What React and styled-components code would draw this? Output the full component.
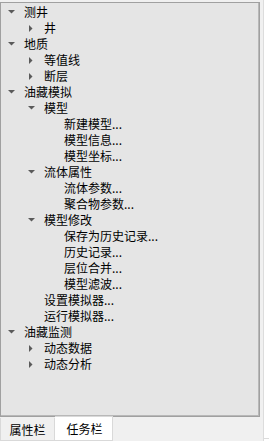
import React from 'react'
import styled, { createGlobalStyle } from 'styled-components'

const GlobalStyle = createGlobalStyle`
  html, body {
    margin: 0;
    padding: 0;
    background: #ffffff;
  }
  body {
    font-family: "Noto Sans CJK SC", "Liberation Sans", sans-serif;
    font-size: 12px;
    color: #000;
  }
`

const tree = [
  { label: '测井', level: 0, arrow: 'open' },
  { label: '井', level: 1, arrow: 'closed' },
  { label: '地质', level: 0, arrow: 'open' },
  { label: '等值线', level: 1, arrow: 'closed' },
  { label: '断层', level: 1, arrow: 'closed' },
  { label: '油藏模拟', level: 0, arrow: 'open' },
  { label: '模型', level: 1, arrow: 'open' },
  { label: '新建模型...', level: 2 },
  { label: '模型信息...', level: 2 },
  { label: '模型坐标...', level: 2 },
  { label: '流体属性', level: 1, arrow: 'open' },
  { label: '流体参数...', level: 2 },
  { label: '聚合物参数...', level: 2 },
  { label: '模型修改', level: 1, arrow: 'open' },
  { label: '保存为历史记录...', level: 2 },
  { label: '历史记录...', level: 2 },
  { label: '层位合并...', level: 2 },
  { label: '模型滤波...', level: 2 },
  { label: '设置模拟器...', level: 1 },
  { label: '运行模拟器...', level: 1 },
  { label: '油藏监测', level: 0, arrow: 'open' },
  { label: '动态数据', level: 1, arrow: 'closed' },
  { label: '动态分析', level: 1, arrow: 'closed' },
]

const Window = styled.div`
  width: 269px;
  height: 441px;
  display: flex;
  background: #ffffff;
`

const Dock = styled.div`
  width: 264px;
  height: 441px;
  display: flex;
  flex-direction: column;
  background: #f0f0f0;
  border-right: 1px solid #dcdcdc;
  box-sizing: border-box;
`

const Side = styled.div`
  flex: 1;
  height: 438px;
  border-bottom: 1px solid #dcdcdc;
`

const Panel = styled.div`
  margin-top: 2px;
  width: 260px;
  height: 415px;
  box-sizing: border-box;
  background: #e5e5e5;
  border: 1px solid #a0a0a0;
  box-shadow: inset -1px -1px 0 #b8b8b8;
  padding-top: 1px;
  overflow: hidden;
`

const Row = styled.div`
  height: 16px;
  display: flex;
  align-items: center;
  padding-left: ${({ level }) => 3 + level * 20}px;
  line-height: 16px;
  white-space: nowrap;
`

const ArrowBox = styled.span`
  width: 20px;
  height: 16px;
  box-sizing: border-box;
  display: flex;
  align-items: center;
  padding-left: ${({ kind }) => (kind === 'closed' ? 5 : 4)}px;
  flex-shrink: 0;
`

const Label = styled.span`
  font-size: 12px;
  color: #000;
`

const Tabs = styled.div`
  display: flex;
  height: 24px;
  align-items: flex-end;
`

const Tab = styled.div`
  height: ${({ active }) => (active ? 25 : 23)}px;
  width: ${({ active }) => (active ? 58 : 55)}px;
  box-sizing: border-box;
  display: flex;
  align-items: center;
  justify-content: center;
  font-size: 12px;
  background: ${({ active }) => (active ? '#ffffff' : '#f0f0f0')};
  border: 1px solid #d9d9d9;
  border-top: ${({ active }) => (active ? '1px solid #d9d9d9' : 'none')};
  border-left: ${({ active }) => (active ? 'none' : '1px solid #d9d9d9')};
  margin-top: ${({ active }) => (active ? -1 : 0)}px;
  padding-left: ${({ active }) => (active ? 2 : 0)}px;
`

const Arrow = ({ kind }) => {
  if (kind === 'open') {
    return (
      <svg width="7" height="4" viewBox="0 0 7 4">
        <path d="M0 0 L7 0 L3.5 3.5 Z" fill="#5a5a5a" />
      </svg>
    )
  }
  if (kind === 'closed') {
    return (
      <svg width="4" height="7" viewBox="0 0 4 7">
        <path d="M0 0 L3.5 3.5 L0 7 Z" fill="#5a5a5a" />
      </svg>
    )
  }
  return null
}

export default function App() {
  return (
    <>
      <GlobalStyle />
      <Window>
        <Dock>
          <Panel>
            {tree.map((item, i) => (
              <Row key={i} level={item.level}>
                <ArrowBox kind={item.arrow}>
                  <Arrow kind={item.arrow} />
                </ArrowBox>
                <Label>{item.label}</Label>
              </Row>
            ))}
          </Panel>
          <Tabs>
            <Tab>属性栏</Tab>
            <Tab active>任务栏</Tab>
          </Tabs>
        </Dock>
        <Side />
      </Window>
    </>
  )
}
